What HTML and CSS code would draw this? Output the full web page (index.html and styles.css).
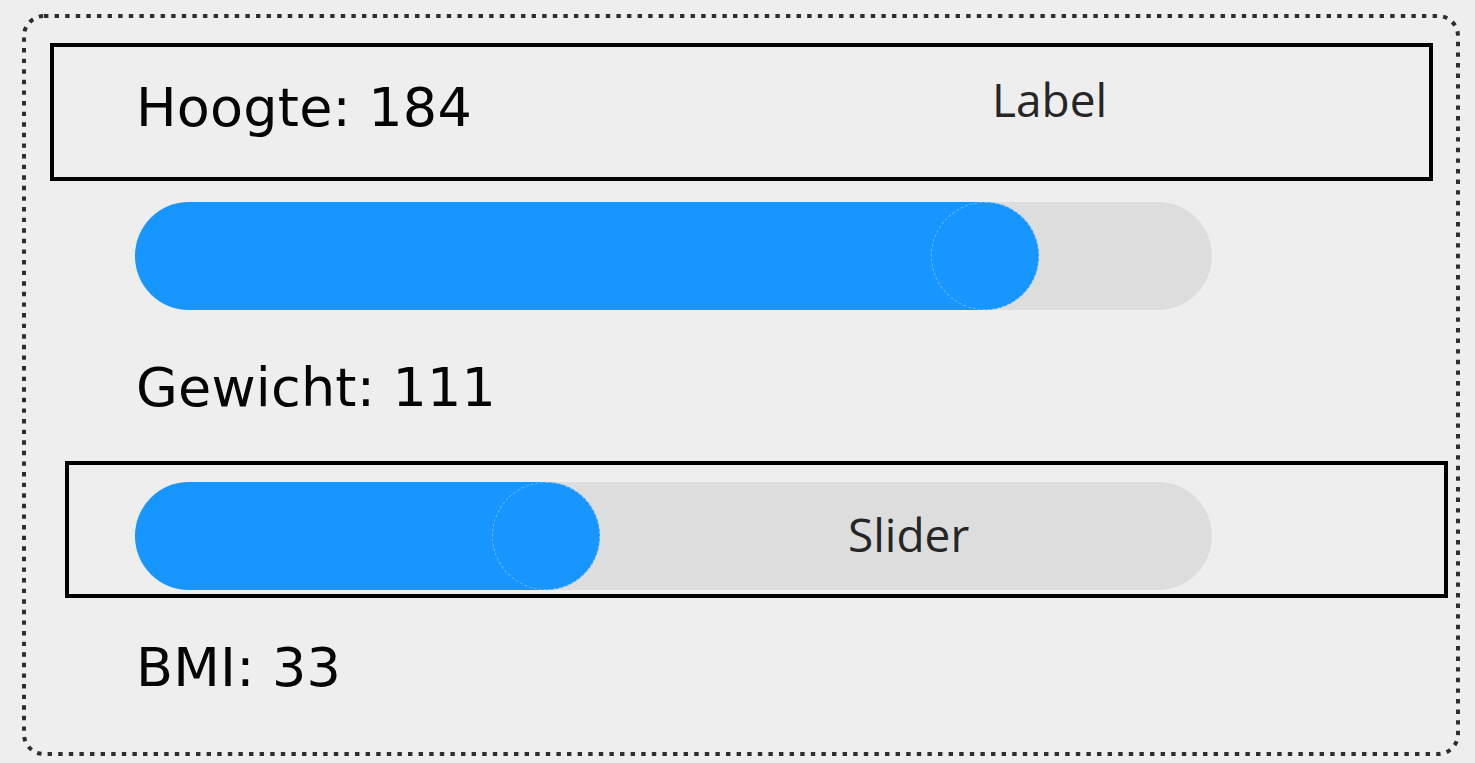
FILE: index.html
```html
<!DOCTYPE html>
<html lang="nl">
<head>
<meta charset="utf-8">
<title>BMI</title>
<link rel="stylesheet" href="styles.css">
</head>
<body>
<div class="panel">
  <svg class="panel-frame" width="1438" height="742" viewBox="0 0 1438 742" aria-hidden="true">
    <rect x="2" y="2" width="1434" height="738" rx="20" ry="20" fill="none" stroke="#2e2e2e" stroke-width="4" stroke-dasharray="4.4 6.2"></rect>
  </svg>
  <div class="value">Hoogte: 184</div>
  <div class="slider">
    <div class="fill" style="width: 850px"></div>
    <div class="thumb" style="left: 796px"></div>
  </div>
  <div class="value">Gewicht: 111</div>
  <div class="slider">
    <div class="fill" style="width: 410px"></div>
    <div class="thumb" style="left: 357px"></div>
  </div>
  <div class="value">BMI: 33</div>

  <div class="note note-label"><span class="note-text">Label</span></div>
  <div class="note note-slider"><span class="note-text">Slider</span></div>
</div>
</body>
</html>
```

FILE: styles.css
```css
html, body {
  margin: 0;
  padding: 0;
  background: #eeeeee;
}

body {
  width: 1475px;
  height: 763px;
  overflow: hidden;
}

.panel {
  position: relative;
  box-sizing: border-box;
  margin: 14px 0 0 22px;
  width: 1438px;
  height: 742px;
  padding: 62px 0 56px 113px;
}

.panel-frame {
  position: absolute;
  left: 0;
  top: 0;
  pointer-events: none;
}

.value {
  font-family: "DejaVu Sans", Verdana, sans-serif;
  font-size: 54px;
  line-height: 64px;
  color: #050505;
  padding-left: 1px;
  letter-spacing: 0.2px;
}

.slider {
  position: relative;
  width: 1077px;
  height: 108px;
  margin: 62px 0 46px;
  border-radius: 54px;
  background: #dddddd;
}

.fill {
  position: absolute;
  left: 0;
  top: 0;
  height: 108px;
  border-radius: 54px 0 0 54px;
  background: #1796ff;
}

.thumb {
  position: absolute;
  top: 0;
  box-sizing: border-box;
  width: 108px;
  height: 108px;
  border-radius: 50%;
  background: #1796ff;
  border: 1px dashed rgba(255, 255, 255, 0.35);
}

.note {
  position: absolute;
  box-sizing: border-box;
  width: 1383px;
  border: 4px solid #000000;
}

.note-label {
  left: 28px;
  top: 29px;
  height: 138px;
}

.note-slider {
  left: 43px;
  top: 447px;
  height: 137px;
}

.note-text {
  position: absolute;
  font-family: "Open Sans", "Noto Sans", sans-serif;
  font-size: 46px;
  line-height: 46px;
  color: #262626;
}

.note-label .note-text {
  left: 938px;
  top: 29px;
}

.note-slider .note-text {
  left: 779px;
  top: 46px;
}
```
